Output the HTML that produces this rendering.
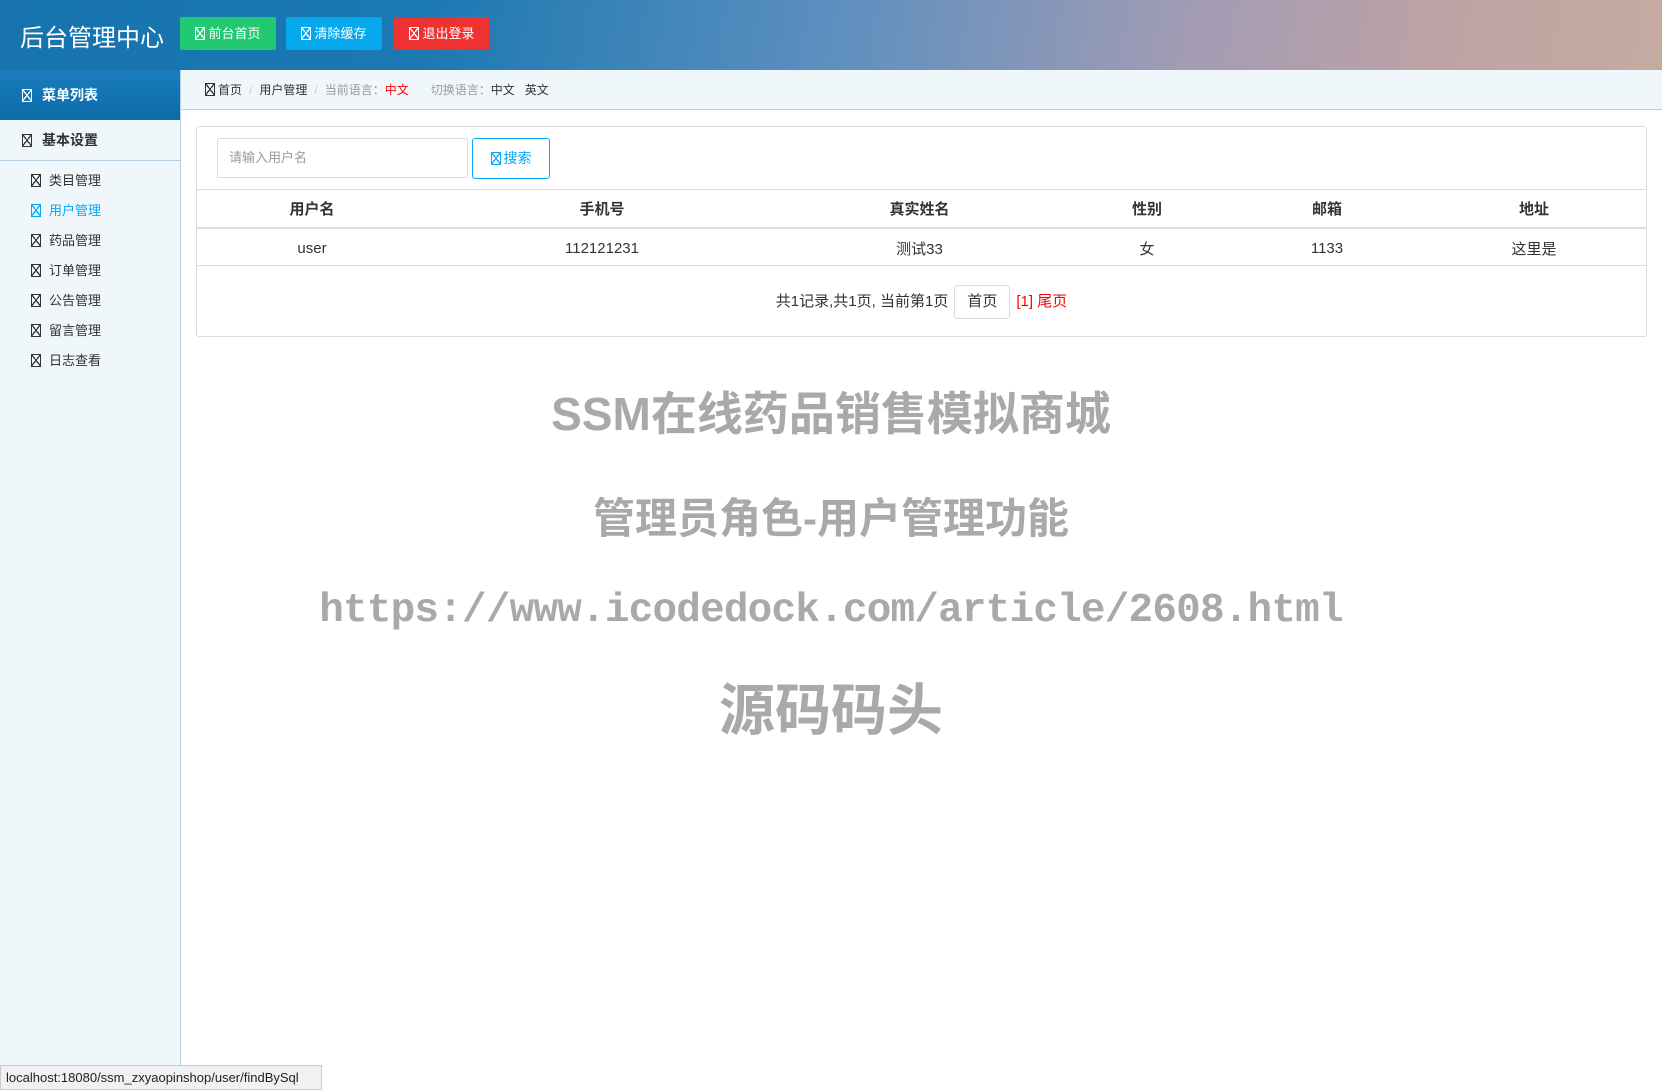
<!DOCTYPE html>
<html><head><meta charset="utf-8">
<style>
*{margin:0;padding:0;box-sizing:border-box}
body{width:1662px;height:1090px;overflow:hidden;background:#fff;font-family:"Liberation Sans","Noto Sans CJK SC",sans-serif;color:#333;position:relative}
.hd{position:absolute;left:0;top:0;width:1662px;height:70px;background:linear-gradient(100deg,#1673ad 0%,#1a78b2 25%,#5d8fbf 50%,#a49cb4 72%,#c0a3a4 88%,#c4aba0 100%)}
.hd .t{position:absolute;left:20px;top:18px;font-size:24px;color:#fff}
.btn{position:absolute;top:17px;height:33px;line-height:33px;width:96px;text-align:center;color:#fff;font-size:13px;border-radius:2px}
.ic{display:inline-block;width:10px;height:13px;border:1px solid currentColor;vertical-align:-2px;margin-right:3px;background:linear-gradient(52deg,transparent 46%,currentColor 46%,currentColor 56%,transparent 56%),linear-gradient(-52deg,transparent 46%,currentColor 46%,currentColor 56%,transparent 56%)}
.sb{position:absolute;left:0;top:70px;width:181px;height:1020px;background:#eff7fb;border-right:1px solid #b4d0dc}
.sb .m{height:50px;line-height:50px;background:linear-gradient(#1a7dbd,#0d6ba8);color:#fff;font-weight:bold;font-size:14px;padding-left:22px}
.sb .g{height:41px;line-height:40px;border-bottom:1px solid #b4d0dc;font-weight:bold;font-size:14px;padding-left:22px;color:#333}
.sb .i{height:30px;line-height:30px;font-size:13px;padding-left:31px;color:#333}
.bc{position:absolute;left:181px;top:70px;width:1481px;height:40px;background:#eff7fb;border-bottom:1px solid #b4d0dc;font-size:12px;line-height:40px;padding-left:24px;color:#333}
.bc .s{color:#ccc;margin:0 7px}
.bc .gr{color:#999}
.box{position:absolute;left:196px;top:126px;width:1451px;height:211px;border:1px solid #ddd;border-radius:3px}
.inp{position:absolute;left:20px;top:11px;width:251px;height:40px;border:1px solid #ddd;font-size:13px;color:#999;line-height:38px;padding-left:11px;border-radius:2px}
.sbtn{position:absolute;left:275px;top:11px;width:78px;height:41px;border:1px solid #03a9f4;color:#03a9f4;border-radius:3px;font-size:14px;line-height:39px;text-align:center}
table{position:absolute;left:0;top:62px;width:1449px;border-collapse:collapse;font-size:15px}
th{height:38px;border-top:1px solid #ddd;border-bottom:2px solid #ddd;font-weight:bold}
td{height:38px;border-bottom:1px solid #ddd;text-align:center;padding-top:3px}
.pg{position:absolute;left:0;top:158px;width:1449px;text-align:center;font-size:15px;line-height:32px}
.pg .b{display:inline-block;border:1px solid #ddd;border-radius:3px;padding:0 12px;margin:0 6px}
.w{position:absolute;left:181px;width:1300px;text-align:center;color:#a9a9a9;font-weight:bold;font-family:"Liberation Sans","Noto Sans CJK SC",sans-serif}
.st{position:absolute;left:0;top:1065px;width:322px;height:25px;background:#f1f1f1;border:1px solid #ccc;font-size:13px;line-height:23px;padding-left:5px;color:#222}
</style></head><body>
<div class="hd"><div class="t">后台管理中心</div>
<div class="btn" style="left:180px;background:#22c872"><span class="ic"></span>前台首页</div>
<div class="btn" style="left:286px;background:#05a8ec"><span class="ic"></span>清除缓存</div>
<div class="btn" style="left:394px;background:#ee3232"><span class="ic"></span>退出登录</div>
</div>
<div class="sb">
<div class="m"><span class="ic" style="margin-right:10px"></span>菜单列表</div>
<div class="g"><span class="ic" style="margin-right:10px"></span>基本设置</div>
<div style="height:5px"></div>
<div class="i"><span class="ic" style="margin-right:8px"></span>类目管理</div>
<div class="i" style="color:#03a9f4"><span class="ic" style="margin-right:8px"></span>用户管理</div>
<div class="i"><span class="ic" style="margin-right:8px"></span>药品管理</div>
<div class="i"><span class="ic" style="margin-right:8px"></span>订单管理</div>
<div class="i"><span class="ic" style="margin-right:8px"></span>公告管理</div>
<div class="i"><span class="ic" style="margin-right:8px"></span>留言管理</div>
<div class="i"><span class="ic" style="margin-right:8px"></span>日志查看</div>
</div>
<div class="bc"><span class="ic"></span>首页<span class="s">/</span>用户管理<span class="s">/</span><span class="gr">当前语言：</span><span style="color:red">中文</span><span class="gr" style="margin-left:22px">切换语言：</span>中文&nbsp;&nbsp; 英文</div>
<div class="box">
<div class="inp">请输入用户名</div>
<div class="sbtn"><span class="ic"></span>搜索</div>
<table>
<tr><th style="width:230px">用户名</th><th style="width:350px">手机号</th><th style="width:285px">真实姓名</th><th style="width:170px">性别</th><th style="width:190px">邮箱</th><th>地址</th></tr>
<tr><td>user</td><td>112121231</td><td>测试33</td><td>女</td><td>1133</td><td>这里是</td></tr>
</table>
<div class="pg">共1记录,共1页, 当前第1页<span class="b">首页</span><span style="color:red">[1] 尾页</span></div>
</div>
<div class="w" style="top:378px;font-size:46px">SSM在线药品销售模拟商城</div>
<div class="w" style="top:485px;font-size:42px">管理员角色-用户管理功能</div>
<div class="w" style="top:588px;font-size:41px;letter-spacing:-0.8px;font-family:'Liberation Mono',monospace">https://www.icodedock.com/article/2608.html</div>
<div class="w" style="top:666px;font-size:56px">源码码头</div>
<div class="st">localhost:18080/ssm_zxyaopinshop/user/findBySql</div>
</body></html>
